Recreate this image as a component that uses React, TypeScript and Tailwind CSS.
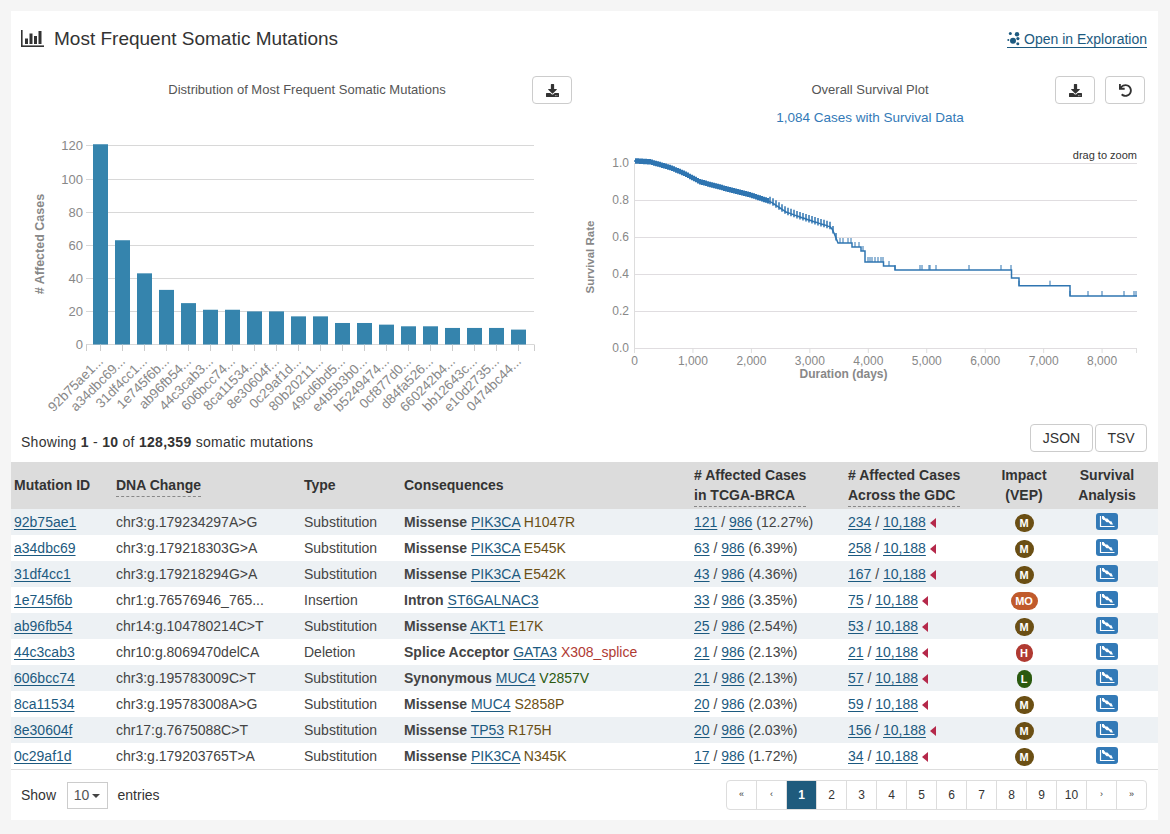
import { FaDownload, FaUndo } from "react-icons/fa";

const font = { fontFamily: '"Liberation Sans", Arial, sans-serif' };

const BAR_VALUES = [121, 63, 43, 33, 25, 21, 21, 20, 20, 17, 17, 13, 13, 12, 11, 11, 10, 10, 10, 9];
const BAR_LABELS = [
  "92b75ae1...", "a34dbc69...", "31df4cc1...", "1e745f6b...", "ab96fb54...",
  "44c3cab3...", "606bcc74...", "8ca11534...", "8e30604f...", "0c29af1d...",
  "80b20211...", "49cd6bd5...", "e4b5b3b0...", "b5249474...", "0cf877d0...",
  "d84fa526...", "660242b4...", "bb12643c...", "e10d2735...", "0474bc44...",
];

type Impact = "M" | "MO" | "H" | "L";

type Row = {
  id: string;
  dna: string;
  type: string;
  kind: string;
  gene: string;
  aa: string;
  cases: number;
  pct: string;
  gdc: number;
  impact: Impact;
};

const ROWS: Row[] = [
  { id: "92b75ae1", dna: "chr3:g.179234297A>G", type: "Substitution", kind: "Missense", gene: "PIK3CA", aa: "H1047R", cases: 121, pct: "12.27", gdc: 234, impact: "M" },
  { id: "a34dbc69", dna: "chr3:g.179218303G>A", type: "Substitution", kind: "Missense", gene: "PIK3CA", aa: "E545K", cases: 63, pct: "6.39", gdc: 258, impact: "M" },
  { id: "31df4cc1", dna: "chr3:g.179218294G>A", type: "Substitution", kind: "Missense", gene: "PIK3CA", aa: "E542K", cases: 43, pct: "4.36", gdc: 167, impact: "M" },
  { id: "1e745f6b", dna: "chr1:g.76576946_765...", type: "Insertion", kind: "Intron", gene: "ST6GALNAC3", aa: "", cases: 33, pct: "3.35", gdc: 75, impact: "MO" },
  { id: "ab96fb54", dna: "chr14:g.104780214C>T", type: "Substitution", kind: "Missense", gene: "AKT1", aa: "E17K", cases: 25, pct: "2.54", gdc: 53, impact: "M" },
  { id: "44c3cab3", dna: "chr10:g.8069470delCA", type: "Deletion", kind: "Splice Acceptor", gene: "GATA3", aa: "X308_splice", cases: 21, pct: "2.13", gdc: 21, impact: "H" },
  { id: "606bcc74", dna: "chr3:g.195783009C>T", type: "Substitution", kind: "Synonymous", gene: "MUC4", aa: "V2857V", cases: 21, pct: "2.13", gdc: 57, impact: "L" },
  { id: "8ca11534", dna: "chr3:g.195783008A>G", type: "Substitution", kind: "Missense", gene: "MUC4", aa: "S2858P", cases: 20, pct: "2.03", gdc: 59, impact: "M" },
  { id: "8e30604f", dna: "chr17:g.7675088C>T", type: "Substitution", kind: "Missense", gene: "TP53", aa: "R175H", cases: 20, pct: "2.03", gdc: 156, impact: "M" },
  { id: "0c29af1d", dna: "chr3:g.179203765T>A", type: "Substitution", kind: "Missense", gene: "PIK3CA", aa: "N345K", cases: 17, pct: "1.72", gdc: 34, impact: "M" },
];

const IMPACT_TEXT: Record<Impact, string> = {
  M: "text-[#6b4f14]",
  MO: "text-[#c05a2c]",
  H: "text-[#b03a32]",
  L: "text-[#2b5a0f]",
};

const IMPACT_BADGE: Record<Impact, string> = {
  M: "bg-[#6b4f14] w-[19px]",
  MO: "bg-[#c05a2c] w-[27px]",
  H: "bg-[#b03a32] w-[17px]",
  L: "bg-[#2b5a0f] w-[15px]",
};

// page-space anchors of the survival curve, read off the axes
const CURVE: [number, number][] = [
  [634, 161], [650, 162], [671, 168], [685, 174], [700, 182], [730, 190], [750, 195],
  [771, 202], [786, 212], [800, 217], [815, 222], [831, 227], [834, 233], [838, 243],
];
const LATE_STEPS: [number, number][] = [
  [848, 243], [852, 247], [861, 251], [865, 262], [883.5, 266], [895, 270],
  [1011.5, 278], [1019, 285.7], [1070, 296], [1137, 296],
];
const LATE_TICKS = [
  840, 843, 848, 851, 855, 859, 863, 868, 870, 872, 875, 878, 881, 883, 889, 895, 920, 922,
  929, 930, 936, 969, 1001, 1011, 1019, 1050, 1070, 1088, 1102, 1124, 1134, 1136,
];

function curveAt(x: number) {
  for (let i = 1; i < CURVE.length; i++) {
    if (x <= CURVE[i][0]) {
      const [x0, y0] = CURVE[i - 1];
      const [x1, y1] = CURVE[i];
      return y0 + ((y1 - y0) * (x - x0)) / (x1 - x0);
    }
  }
  return CURVE[CURVE.length - 1][1];
}

function lateAt(x: number) {
  if (x <= 838) return curveAt(x);
  let y = 243;
  for (const [sx, sy] of LATE_STEPS) {
    if (x >= sx) y = sy;
  }
  return y;
}

function curvePath() {
  let d = `M634 ${curveAt(634).toFixed(1)}`;
  for (let x = 636; x <= 838; x += 2) d += `L${x} ${curveAt(x).toFixed(1)}`;
  let prev = 243;
  for (const [x, y] of LATE_STEPS) {
    d += `L${x} ${prev}L${x} ${y}`;
    prev = y;
  }
  return d;
}

function BarChart() {
  const y0 = 344.5;
  const unit = 33.1 / 20;
  return (
    <svg viewBox="11 130 569 294" className="block h-[294px] w-[569px]" style={font}>
      {[0, 20, 40, 60, 80, 100, 120].map((v) => {
        const y = Math.floor(y0 - v * unit) + 0.5;
        return (
          <g key={v}>
            <line x1={86} x2={534} y1={y} y2={y} stroke="#d8d8d8" strokeWidth={1} />
            <text x={83} y={y + 4} textAnchor="end" fontSize={13} fill="#888">
              {v}
            </text>
          </g>
        );
      })}
      {BAR_VALUES.map((v, i) => (
        <rect key={i} x={93 + i * 22} y={y0 - v * unit} width={15} height={v * unit} fill="#3584ad" />
      ))}
      <line x1={86.5} x2={86.5} y1={y0} y2={351} stroke="#ccc" />
      <line x1={534.5} x2={534.5} y1={y0} y2={351} stroke="#ccc" />
      {BAR_VALUES.map((_, i) => (
        <line key={i} x1={100.5 + i * 22} x2={100.5 + i * 22} y1={y0} y2={351} stroke="#ccc" />
      ))}
      {BAR_LABELS.map((label, i) => (
        <text
          key={label}
          transform={`translate(${104 + i * 22} 362) rotate(-45)`}
          textAnchor="end"
          fontSize={13.5}
          fill="#888"
        >
          {label}
        </text>
      ))}
      <text
        transform="translate(44 244) rotate(-90)"
        textAnchor="middle"
        fontSize={12.5}
        fontWeight="bold"
        fill="#888"
      >
        # Affected Cases
      </text>
    </svg>
  );
}

function SurvivalChart() {
  const earlyTicks: number[] = [];
  for (let x = 636; x < 838; x += x < 770 ? 2 : 3) earlyTicks.push(x);
  return (
    <svg viewBox="580 130 578 294" className="block h-[294px] w-[578px]" style={font}>
      {[1, 0.8, 0.6, 0.4, 0.2, 0].map((s) => {
        const y = 348.5 - 185 * s;
        return (
          <g key={s}>
            <line x1={634} x2={1137} y1={y} y2={y} stroke="#e0dde0" />
            <text x={629} y={y + 3} textAnchor="end" fontSize={12} fill="#888">
              {s.toFixed(1)}
            </text>
          </g>
        );
      })}
      <line x1={634.5} x2={634.5} y1={163} y2={348} stroke="#ddd" />
      {[0, 1, 2, 3, 4, 5, 6, 7, 8].map((k) => {
        const x = 634.5 + k * 58.45;
        return (
          <g key={k}>
            <line x1={x} x2={x} y1={348} y2={353} stroke="#ddd" />
            <text x={x} y={365} textAnchor="middle" fontSize={12} fill="#888">
              {k === 0 ? "0" : `${k},000`}
            </text>
          </g>
        );
      })}
      <line x1={1136.5} x2={1136.5} y1={348} y2={353} stroke="#ddd" />
      <text x={843.5} y={378} textAnchor="middle" fontSize={12} fontWeight="bold" fill="#888">
        Duration (days)
      </text>
      <text
        transform="translate(594 257) rotate(-90)"
        textAnchor="middle"
        fontSize={11.5}
        fontWeight="bold"
        fill="#888"
      >
        Survival Rate
      </text>
      <text x={1137} y={159} textAnchor="end" fontSize={11} fill="#333">
        drag to zoom
      </text>
      <path d={curvePath()} fill="none" stroke="#2f75b1" strokeWidth={1.5} />
      {earlyTicks.map((x) => (
        <line
          key={x}
          x1={x}
          x2={x}
          y1={curveAt(x) - (x < 770 ? 3 : 3 + (x % 3))}
          y2={curveAt(x) + 2.5}
          stroke="#2f75b1"
          strokeWidth={x < 770 ? 2 : 1.5}
        />
      ))}
      {LATE_TICKS.map((x) => (
        <line key={x} x1={x} x2={x} y1={lateAt(x) - 5} y2={lateAt(x)} stroke="#2f75b1" strokeWidth={1} />
      ))}
    </svg>
  );
}

function IconButton({ children }: { children: React.ReactNode }) {
  return (
    <button className="flex h-[28px] w-10 items-center justify-center rounded-[4px] border border-[#ccc] bg-white text-[13px] text-[#333]">
      {children}
    </button>
  );
}

function BarsIcon() {
  return (
    <svg viewBox="0 0 23 17" className="h-[17px] w-[23px] text-[#333]" fill="currentColor">
      <rect x="0" y="0" width="1.6" height="17" />
      <rect x="0" y="15.4" width="23" height="1.6" />
      <rect x="4" y="8.5" width="3" height="5.5" />
      <rect x="8.5" y="3.5" width="3" height="10.5" />
      <rect x="13" y="6" width="3" height="8" />
      <rect x="17.5" y="1" width="3" height="13" />
    </svg>
  );
}

function ExploreIcon() {
  return (
    <svg viewBox="0 0 14 14" className="h-[14px] w-[14px] text-[#1c5a80]" fill="currentColor">
      <circle cx="6" cy="8.7" r="3" />
      <circle cx="3.3" cy="1.6" r="1.5" />
      <circle cx="10" cy="2.2" r="2.2" />
      <circle cx="1.3" cy="8" r="1" />
      <circle cx="10.9" cy="6.6" r="1.6" />
      <circle cx="10.8" cy="11.8" r="1.5" />
    </svg>
  );
}

function SurvivalIcon() {
  return (
    <svg viewBox="0 0 22 17" className="h-[17px] w-[22px]">
      <path d="M4.5 3v10.5H18.5" fill="none" stroke="white" strokeWidth="1.2" />
      <path d="M6 3h1.6l2 2.6h1.8l2.6 2.6h1.4L17 11.4h-2.4l-2-2.2h-2L8.4 7H7.2L6 5.6z" fill="white" />
    </svg>
  );
}

function A({ children }: { children: React.ReactNode }) {
  return <a className="text-[#1c5a80] underline underline-offset-2">{children}</a>;
}

function HeaderHint({ children }: { children: React.ReactNode }) {
  return <span className="inline-block border-b border-dashed border-[#888] pb-[1px]">{children}</span>;
}

function MutationRow({ row, index }: { row: Row; index: number }) {
  return (
    <tr className={index % 2 === 0 ? "h-[26px] bg-[#edf1f4]" : "h-[26px] bg-white"}>
      <td className="px-[3px]">
        <A>{row.id}</A>
      </td>
      <td className="px-[3px]">{row.dna}</td>
      <td className="px-[3px]">{row.type}</td>
      <td className="px-[3px]">
        <span className="font-bold">{row.kind}</span> <A>{row.gene}</A>{" "}
        <span className={IMPACT_TEXT[row.impact]}>{row.aa}</span>
      </td>
      <td className="px-[3px]">
        <A>{row.cases}</A> / <A>986</A> ({row.pct}%)
      </td>
      <td className="px-[3px]">
        <span className="inline-flex items-center gap-[4px]">
          <span>
            <A>{row.gdc}</A> / <A>10,188</A>
          </span>
          <span className="mt-[2px] h-0 w-0 border-y-[5px] border-r-[6px] border-y-transparent border-r-[#b5294a]" />
        </span>
      </td>
      <td className="px-[3px]">
        <div className="mt-[2px] flex justify-center">
          <span
            className={`flex h-[18px] items-center justify-center rounded-full text-[11px] font-bold text-white ${IMPACT_BADGE[row.impact]}`}
          >
            {row.impact}
          </span>
        </div>
      </td>
      <td className="px-[3px]">
        <div className="mb-[1px] flex justify-center">
          <span className="block h-[17px] w-[22px] rounded-[3px] bg-[#337ab7]">
            <SurvivalIcon />
          </span>
        </div>
      </td>
    </tr>
  );
}

function Pager() {
  const items = ["«", "‹", "1", "2", "3", "4", "5", "6", "7", "8", "9", "10", "›", "»"];
  return (
    <div className="flex h-[30px] w-[421px] overflow-hidden rounded-[4px] border border-[#ddd]">
      {items.map((item, i) => (
        <span
          key={item}
          className={
            "flex flex-1 items-center justify-center " +
            (i < 2 || i > 11 ? "text-[9px] " : "text-[12px] ") +
            (i > 0 ? "border-l border-[#ddd] " : "") +
            (item === "1" ? "bg-[#1f5b7d] font-bold text-white" : "text-[#333]")
          }
        >
          {item}
        </span>
      ))}
    </div>
  );
}

export default function App() {
  return (
    <div className="h-[834px] bg-[#f5f5f5] p-[11px] text-[14px] text-[#444]" style={font}>
      <div className="flex h-[809px] w-[1147px] flex-col bg-white">
        <div className="flex h-[54px] items-center justify-between pl-[10px] pr-[11px] pt-[1px]">
          <div className="flex items-center gap-[10px]">
            <BarsIcon />
            <h1 className="mt-[1px] text-[19px] font-normal text-[#333]">Most Frequent Somatic Mutations</h1>
          </div>
          <a className="mt-[2px] flex items-center gap-[3px] border-b border-[#1c5a80] leading-[15px] text-[#1c5a80]">
            <ExploreIcon />
            Open in Exploration
          </a>
        </div>

        <div className="mt-[11px] flex">
          <div className="w-[569px]">
            <div className="flex pl-[31px] pr-[8px]">
              <div className="w-10" />
              <div className="flex-1 text-center text-[13px] leading-[28px] text-[#555]">
                Distribution of Most Frequent Somatic Mutations
              </div>
              <IconButton>
                <FaDownload />
              </IconButton>
            </div>
            <div className="mt-[26px]">
              <BarChart />
            </div>
          </div>
          <div className="w-[578px]">
            <div className="flex pl-[15px] pr-[13px]">
              <div className="w-[90px]" />
              <div className="flex-1 text-center">
                <div className="text-[13px] leading-[28px] text-[#555]">Overall Survival Plot</div>
                <div className="mt-[4px] h-[22px] text-[13.5px] leading-[20px] text-[#337ab7]">
                  1,084 Cases with Survival Data
                </div>
              </div>
              <div className="flex gap-[10px]">
                <IconButton>
                  <FaDownload />
                </IconButton>
                <IconButton>
                  <FaUndo />
                </IconButton>
              </div>
            </div>
            <SurvivalChart />
          </div>
        </div>

        <div className="flex h-[28px] items-center justify-between pl-[10px] pr-[11px] text-[#333]">
          <div className="pt-[8px] tracking-[0.28px]">
            Showing <b>1</b> - <b>10</b> of <b>128,359</b> somatic mutations
          </div>
          <div className="flex gap-[2px]">
            <button className="h-[28px] w-[63px] rounded-[4px] border border-[#ccc]">JSON</button>
            <button className="h-[28px] w-[52px] rounded-[4px] border border-[#ccc]">TSV</button>
          </div>
        </div>

        <div className="mt-[10px] border-b border-[#ddd]">
          <table className="w-full table-fixed text-left whitespace-nowrap">
            <colgroup>
              <col className="w-[102px]" />
              <col className="w-[188px]" />
              <col className="w-[100px]" />
              <col className="w-[290px]" />
              <col className="w-[154px]" />
              <col className="w-[147px]" />
              <col className="w-[64px]" />
              <col />
            </colgroup>
            <thead className="bg-[#dcdcdc] text-[#333]">
              <tr className="h-[47px] leading-[20px]">
                <th className="px-[3px] pb-[2px]">Mutation ID</th>
                <th className="px-[3px]">
                  <HeaderHint>DNA Change</HeaderHint>
                </th>
                <th className="px-[3px] pb-[2px]">Type</th>
                <th className="px-[3px] pb-[2px]">Consequences</th>
                <th className="px-[3px]">
                  <HeaderHint>
                    # Affected Cases
                    <br />
                    in TCGA-BRCA
                  </HeaderHint>
                </th>
                <th className="px-[3px]">
                  <HeaderHint>
                    # Affected Cases
                    <br />
                    Across the GDC
                  </HeaderHint>
                </th>
                <th className="px-[3px] pb-[2px] text-center">
                  Impact
                  <br />
                  (VEP)
                </th>
                <th className="px-[3px] pb-[2px] text-center">
                  Survival
                  <br />
                  Analysis
                </th>
              </tr>
            </thead>
            <tbody>
              {ROWS.map((row, i) => (
                <MutationRow key={row.id} row={row} index={i} />
              ))}
            </tbody>
          </table>
        </div>

        <div className="flex flex-1 items-center justify-between pl-[10px] pr-[11px]">
          <div className="flex items-center text-[#333]">
            <span className="pt-[1px]">Show</span>
            <span className="ml-[10.5px] flex h-[27px] w-[41px] items-center justify-center gap-[3px] border border-[#ccc] pt-[1px] text-[#555]">
              10
              <span className="h-0 w-0 border-x-[4px] border-t-[4px] border-x-transparent border-t-[#444]" />
            </span>
            <span className="ml-[10px] pt-[1px]">entries</span>
          </div>
          <Pager />
        </div>
      </div>
    </div>
  );
}
